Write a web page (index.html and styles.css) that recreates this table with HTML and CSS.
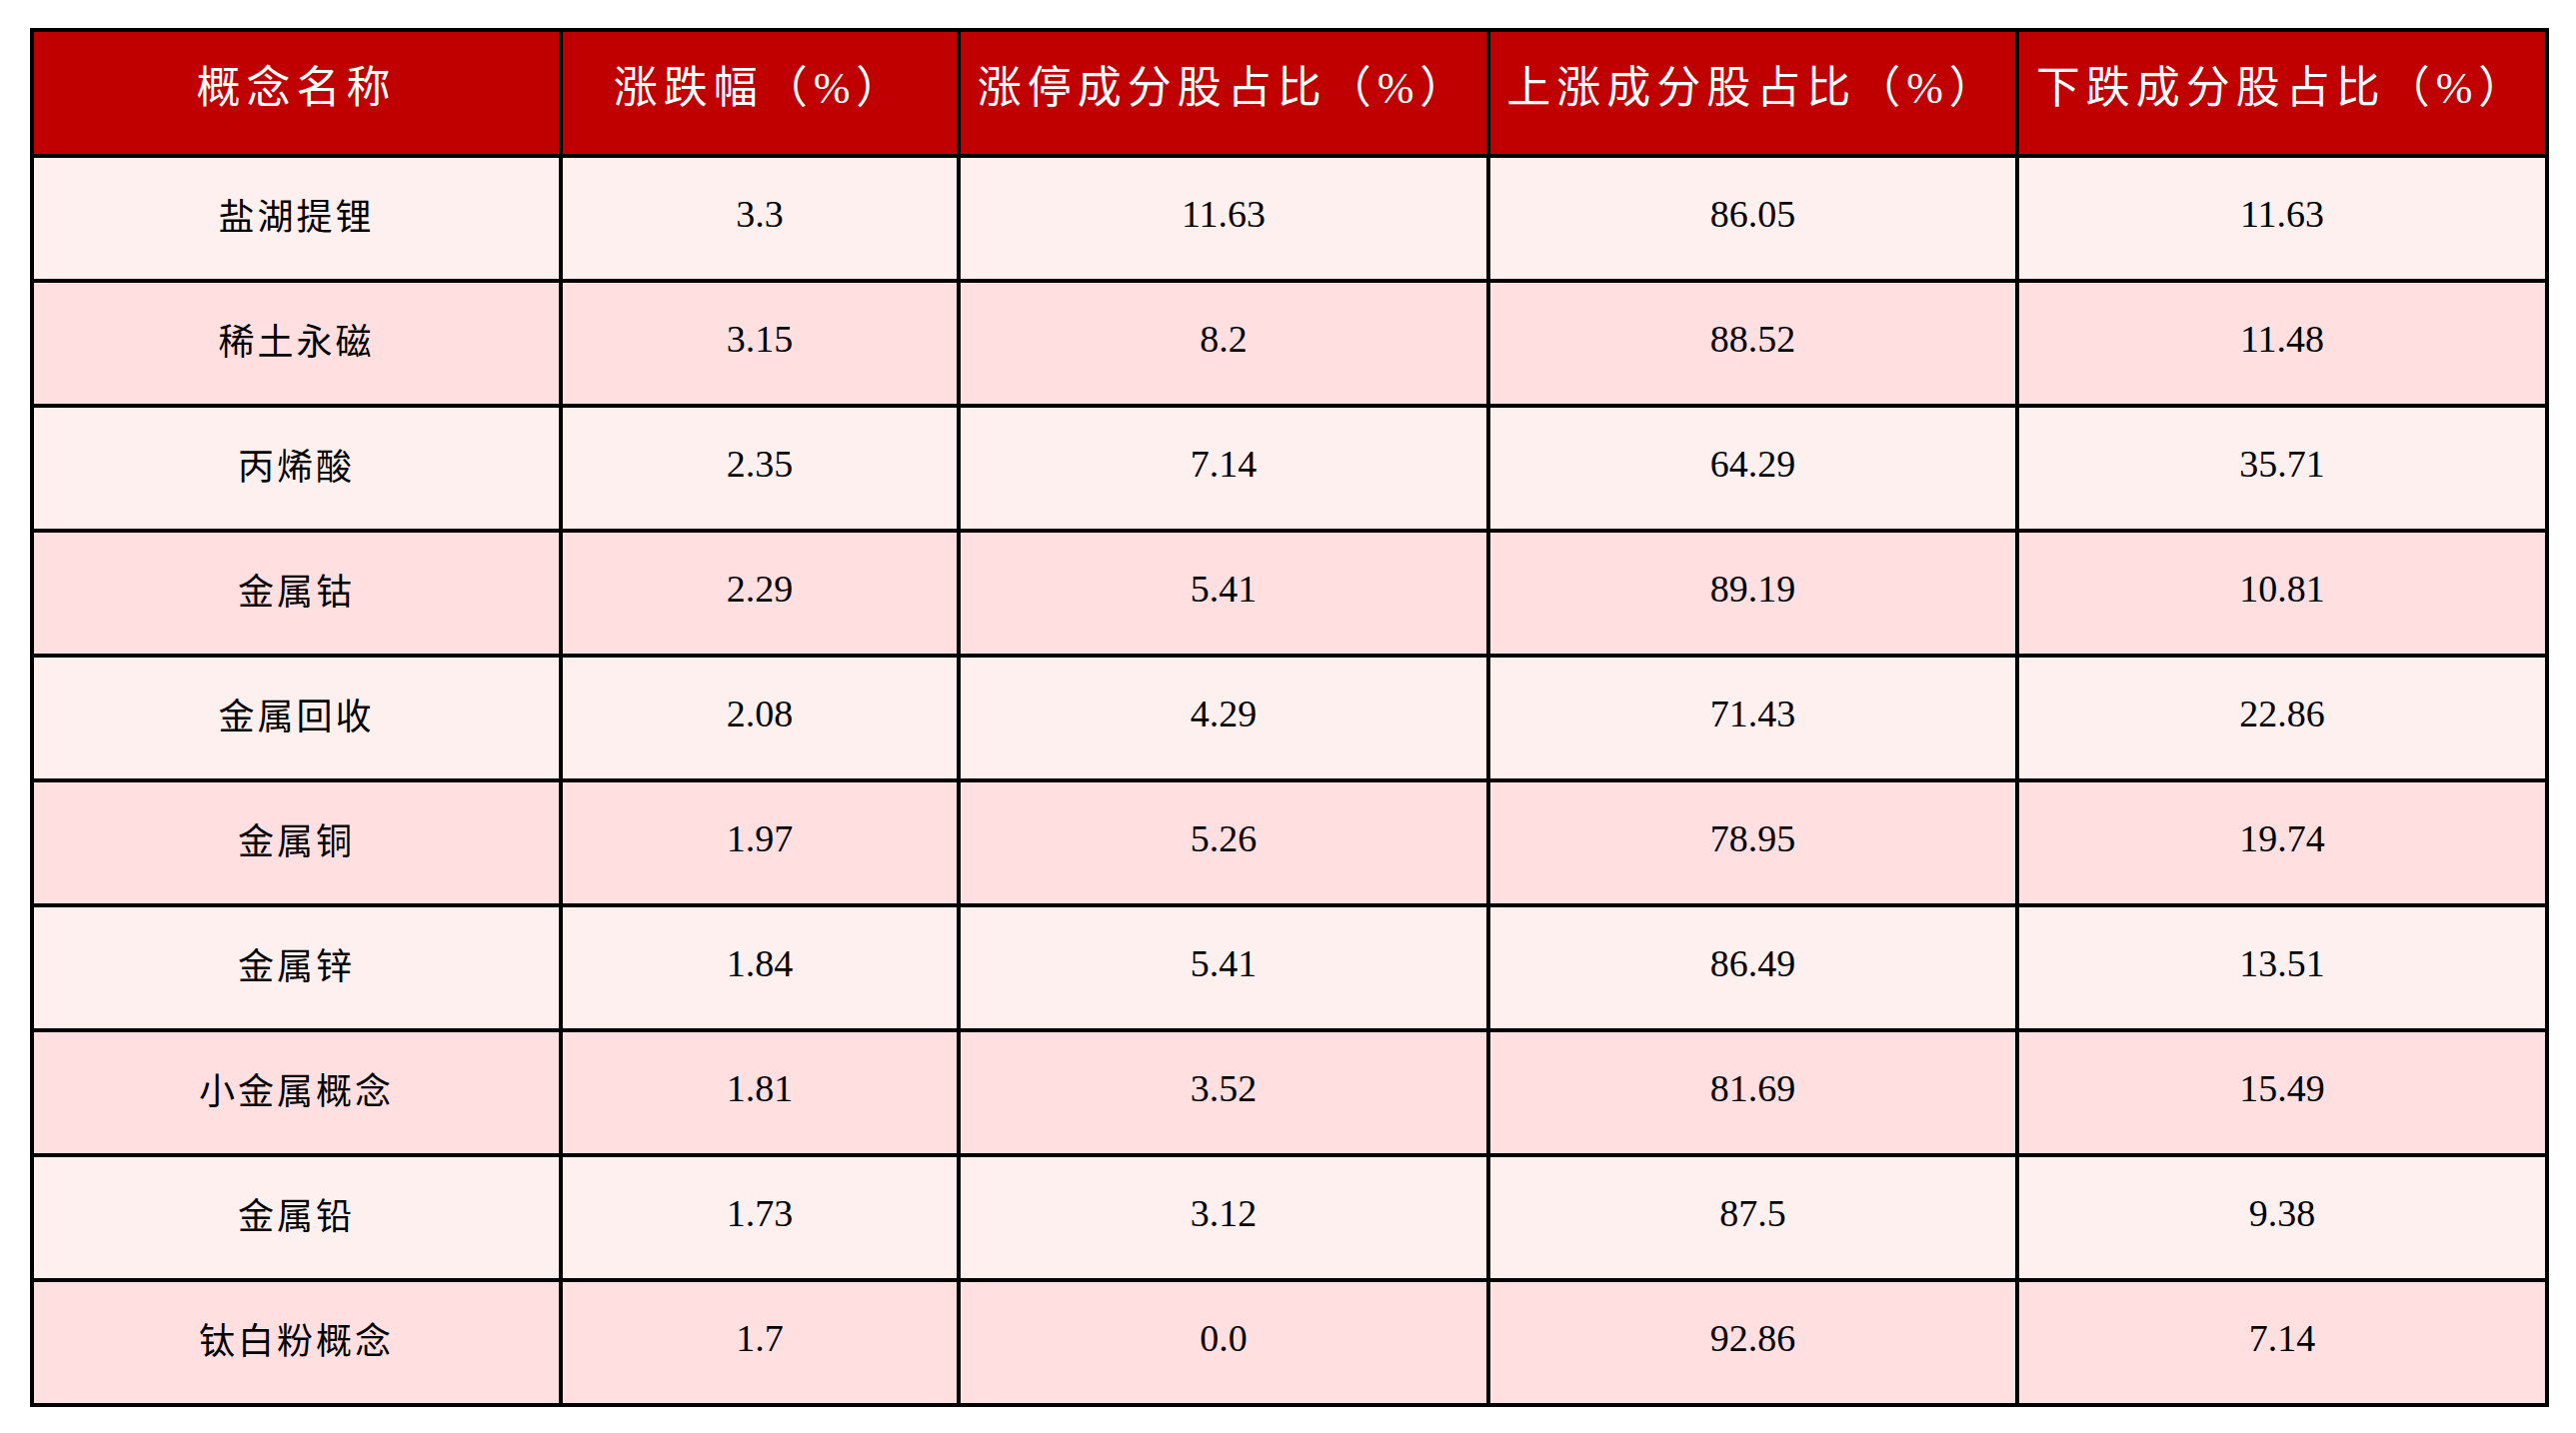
FILE: index.html
```html
<!DOCTYPE html>
<html lang="zh">
<head>
<meta charset="utf-8">
<title>概念板块</title>
<link rel="stylesheet" href="styles.css">
</head>
<body>
<table class="grid">
  <colgroup>
    <col class="c1"><col class="c2"><col class="c3"><col class="c4"><col class="c5">
  </colgroup>
  <thead>
    <tr class="head">
      <th>概念名称</th>
      <th>涨跌幅（%）</th>
      <th>涨停成分股占比（%）</th>
      <th>上涨成分股占比（%）</th>
      <th>下跌成分股占比（%）</th>
    </tr>
  </thead>
  <tbody>
    <tr class="odd"><td class="name">盐湖提锂</td><td>3.3</td><td>11.63</td><td>86.05</td><td>11.63</td></tr>
    <tr class="even"><td class="name">稀土永磁</td><td>3.15</td><td>8.2</td><td>88.52</td><td>11.48</td></tr>
    <tr class="odd"><td class="name">丙烯酸</td><td>2.35</td><td>7.14</td><td>64.29</td><td>35.71</td></tr>
    <tr class="even"><td class="name">金属钴</td><td>2.29</td><td>5.41</td><td>89.19</td><td>10.81</td></tr>
    <tr class="odd"><td class="name">金属回收</td><td>2.08</td><td>4.29</td><td>71.43</td><td>22.86</td></tr>
    <tr class="even"><td class="name">金属铜</td><td>1.97</td><td>5.26</td><td>78.95</td><td>19.74</td></tr>
    <tr class="odd"><td class="name">金属锌</td><td>1.84</td><td>5.41</td><td>86.49</td><td>13.51</td></tr>
    <tr class="even"><td class="name">小金属概念</td><td>1.81</td><td>3.52</td><td>81.69</td><td>15.49</td></tr>
    <tr class="odd"><td class="name">金属铅</td><td>1.73</td><td>3.12</td><td>87.5</td><td>9.38</td></tr>
    <tr class="even"><td class="name">钛白粉概念</td><td>1.7</td><td>0.0</td><td>92.86</td><td>7.14</td></tr>
  </tbody>
</table>
</body>
</html>
```

FILE: styles.css
```css
html, body {
  margin: 0;
  background: #ffffff;
}
body {
  padding: 28px 0 0 30px;
  font-family: "Liberation Serif", "Noto Sans CJK SC", serif;
  color: #000000;
}
.grid {
  border-collapse: collapse;
  table-layout: fixed;
  width: 2516px;
}
.c1 { width: 529px; }
.c2 { width: 398px; }
.c3 { width: 530px; }
.c4 { width: 529px; }
.c5 { width: 530px; }
.grid th, .grid td {
  border: 4px solid #000000;
  text-align: center;
  vertical-align: middle;
  padding: 0;
}
.head {
  height: 126px;
  background: #c00000;
}
.head th {
  color: #ffffff;
  font-weight: normal;
  font-size: 44px;
  letter-spacing: 6px;
  padding-bottom: 18px;
}
.grid tbody tr {
  height: 125px;
}
.grid td {
  font-size: 38px;
  padding-bottom: 10px;
}
.grid td.name {
  font-size: 36px;
  letter-spacing: 3px;
}
.odd { background: #fff0f0; }
.even { background: #ffdfe0; }
```
